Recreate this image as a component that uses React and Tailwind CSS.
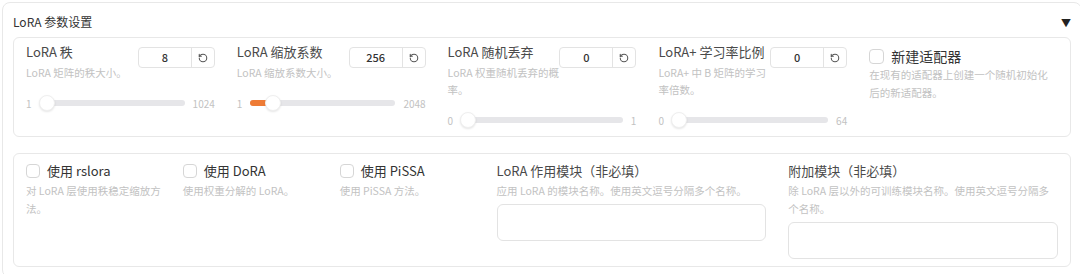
import React from 'react';
import { RotateCcw } from 'lucide-react';

const sliders = [
    { label: 'LoRA 秩', desc: ['LoRA 矩阵的秩大小。'], value: 8, min: 1, max: 1024 },
    { label: 'LoRA 缩放系数', desc: ['LoRA 缩放系数大小。'], value: 256, min: 1, max: 2048 },
    { label: 'LoRA 随机丢弃', desc: ['LoRA 权重随机丢弃的概', '率。'], value: 0, min: 0, max: 1 },
    { label: 'LoRA+ 学习率比例', desc: ['LoRA+ 中 B 矩阵的学习', '率倍数。'], value: 0, min: 0, max: 64 },
];

const checks = [
    { label: '使用 rslora', desc: ['对 LoRA 层使用秩稳定缩放方', '法。'] },
    { label: '使用 DoRA', desc: ['使用权重分解的 LoRA。'] },
    { label: '使用 PiSSA', desc: ['使用 PiSSA 方法。'] },
];

const modules = [
    { label: 'LoRA 作用模块（非必填）', desc: ['应用 LoRA 的模块名称。使用英文逗号分隔多个名称。'] },
    { label: '附加模块（非必填）', desc: ['除 LoRA 层以外的可训练模块名称。使用英文逗号分隔多', '个名称。'] },
];

const Lines = ({ lines, className }) => (
    <div className={className}>
        {lines.map((l, i) => (
            <div key={i} className="whitespace-nowrap">{l}</div>
        ))}
    </div>
);

const Slider = ({ item }) => {
    const pct = (item.value - item.min) / (item.max - item.min);
    // native range thumb: 16px wide, centre moves over (width - 16px)
    const center = `calc(${pct} * (100% - 16px) + 7px)`;
    return (
        <div className="flex flex-col">
            <div className="flex items-start">
                <div className="flex-1 min-w-0">
                    <div className="text-[13px] leading-[18px] text-[#4a4a4a] whitespace-nowrap">{item.label}</div>
                    <Lines lines={item.desc} className="mt-[3px] text-[10.5px] leading-[17px] text-[#c2c2c2]" />
                </div>
                <div className="mt-[4px] flex h-[21px] w-[77px] shrink-0 rounded-[4px] border border-[#e3e3e3] bg-white">
                    <div className="flex flex-1 items-center justify-center text-[11px] font-medium text-[#333]">{item.value}</div>
                    <div className="flex w-[23px] items-center justify-center border-l border-[#e3e3e3] text-[#555]">
                        <RotateCcw size={10} strokeWidth={2.5} />
                    </div>
                </div>
            </div>
            <div className="mt-[13px] flex h-[18px] items-center gap-[8px] text-[10px] text-[#c2c2c2]">
                <span>{item.min}</span>
                <div className="relative h-[6px] flex-1 rounded-full bg-[#e6e6e9]">
                    <div className="absolute left-0 top-0 h-full rounded-full bg-[#ee7b35]" style={{ width: center }} />
                    <div
                        className="absolute top-1/2 h-[16px] w-[16px] -translate-x-1/2 -translate-y-1/2 rounded-full border border-[#efefef] bg-white shadow-[0_1px_2px_rgba(0,0,0,0.1)]"
                        style={{ left: center }}
                    />
                </div>
                <span>{item.max}</span>
            </div>
        </div>
    );
};

const Checkbox = ({ size }) => (
    <span className={`${size} shrink-0 rounded-[4px] border border-[#d6d6d6] bg-white`} />
);

export default function App() {
    return (
        <div className="h-[274px] w-[1080px] overflow-hidden bg-white font-['Noto_Sans_CJK_SC',sans-serif]">
            <div className="ml-[2px] mt-[2px] w-[1080px] rounded-lg border border-[#e8e8e8] px-[10px] pt-[7px] pb-[10px]">
                <div className="mb-[3px] flex h-[24px] items-center justify-between">
                    <span className="text-[12px] text-[#333]">LoRA 参数设置</span>
                    <span className="text-[10px] text-[#222]">▼</span>
                </div>

                <div className="grid grid-cols-5 gap-x-[22px] rounded-md border border-[#e8e8e8] px-3 pt-[5px] pb-[7px]">
                    {sliders.map((s) => (
                        <Slider key={s.label} item={s} />
                    ))}
                    <div className="flex flex-col pt-[3px]">
                        <div className="flex h-[20px] items-center gap-[7px]">
                            <Checkbox size="h-[15px] w-[15px]" />
                            <span className="text-[14px] text-[#333]">新建适配器</span>
                        </div>
                        <Lines
                            lines={['在现有的适配器上创建一个随机初始化', '后的新适配器。']}
                            className="text-[10.5px] leading-[18px] text-[#c2c2c2]"
                        />
                    </div>
                </div>

                <div className="mt-[16px] flex gap-[22px] rounded-md border border-[#e8e8e8] px-3 pt-[8px] pb-[7px]">
                    {checks.map((c) => (
                        <div key={c.label} className="flex min-w-0 flex-1 flex-col">
                            <div className="flex h-[18px] items-center gap-[7px]">
                                <Checkbox size="h-[14px] w-[14px]" />
                                <span className="text-[13px] text-[#333]">{c.label}</span>
                            </div>
                            <Lines lines={c.desc} className="mt-[2px] text-[10.5px] leading-[18px] text-[#c2c2c2]" />
                        </div>
                    ))}
                    {modules.map((m) => (
                        <div key={m.label} className="flex min-w-0 flex-[2] flex-col">
                            <div className="text-[13px] leading-[18px] text-[#4a4a4a]">{m.label}</div>
                            <Lines lines={m.desc} className="mt-[2px] text-[10.5px] leading-[18px] text-[#c2c2c2]" />
                            <div className="mt-[4px] h-[37px] rounded-md border border-[#e3e3e3] bg-white" />
                        </div>
                    ))}
                </div>
            </div>
        </div>
    );
}
